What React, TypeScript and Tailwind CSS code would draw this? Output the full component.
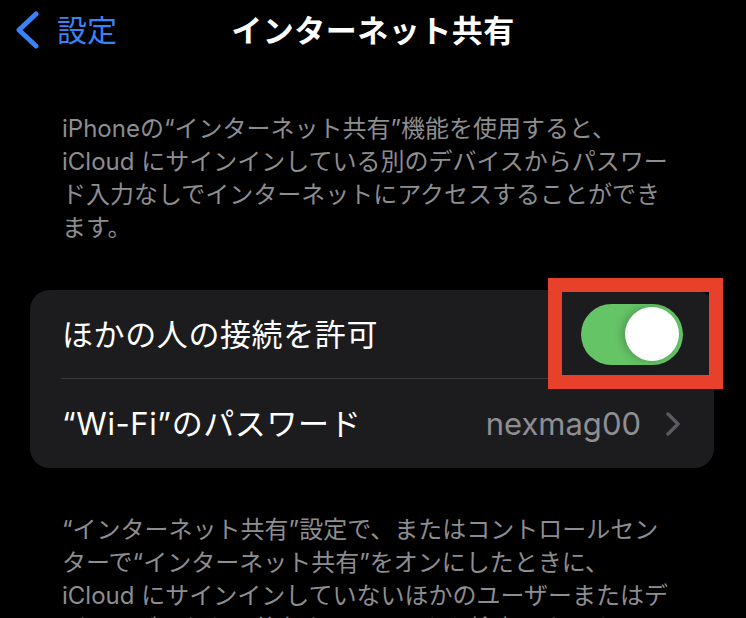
import React from "react";

const font = { fontFamily: 'Inter, "Noto Sans CJK JP", sans-serif' };

export default function App() {
  return (
    <div
      className="w-[746px] h-[618px] overflow-hidden bg-black text-white font-['Inter','Noto_Sans_CJK_JP',sans-serif]"
      style={font}
    >
      {/* Header */}
      <div className="grid grid-cols-[1fr_auto_1fr] items-center h-[60px]">
        <div className="flex items-center pl-[14px] gap-[17px] text-[#3a82f7]">
          <svg width="26" height="38" viewBox="0 0 26 38" fill="none">
            <path
              d="M22 3 L5 19 L22 35"
              stroke="#3a82f7"
              strokeWidth="5"
              strokeLinecap="round"
              strokeLinejoin="round"
            />
          </svg>
          <span className="text-[30px] leading-none">設定</span>
        </div>
        <div className="text-[31px] font-semibold leading-none tracking-[0.5px]">
          インターネット共有
        </div>
        <div />
      </div>

      {/* Description */}
      <div className="pt-[52px] pl-[62px] text-[24px] leading-[33px] text-[#8d8d92] whitespace-nowrap">
        <div>iPhoneの“インターネット共有”機能を使用すると、</div>
        <div>iCloud にサインインしている別のデバイスからパスワー</div>
        <div>ド入力なしでインターネットにアクセスすることができ</div>
        <div>ます。</div>
      </div>

      {/* Card */}
      <div className="mt-[46px] ml-[30px] mr-[32px] rounded-[20px] bg-[#1c1c1e]">
        <div className="h-[88px] flex items-center justify-between pl-[32px] pr-[31px]">
          <span className="text-[31px] leading-none tracking-[0.6px]">ほかの人の接続を許可</span>
          <div className="relative">
            <div className="w-[102px] h-[61px] rounded-full bg-[#65c466] flex items-center justify-end pr-[4px]">
              <div className="w-[54px] h-[54px] rounded-full bg-white shadow-[-3px_0_8px_rgba(0,0,0,0.22)]" />
            </div>
            <div className="absolute left-[-33px] top-[-26px] w-[175px] h-[111px] border-[14px] border-[#e8412b]" />
          </div>
        </div>
        <div className="ml-[31px] h-px bg-[#3a3a3c]" />
        <div className="h-[89px] flex items-center justify-between pl-[32px] pr-[33px]">
          <span className="text-[31px] leading-none tracking-[0.6px]">“Wi-Fi”のパスワード</span>
          <div className="flex items-center gap-[24px]">
            <span className="text-[31px] leading-none text-[#8e8e93]">nexmag00</span>
            <svg width="16" height="24" viewBox="0 0 16 24" fill="none">
              <path
                d="M3 2 L13 12 L3 22"
                stroke="#5b5b5f"
                strokeWidth="3.5"
                strokeLinecap="round"
                strokeLinejoin="round"
              />
            </svg>
          </div>
        </div>
      </div>

      {/* Footer */}
      <div className="mt-[45px] pl-[62px] text-[24px] leading-[33px] text-[#8d8d92] whitespace-nowrap">
        <div>“インターネット共有”設定で、またはコントロールセン</div>
        <div>ターで“インターネット共有”をオンにしたときに、</div>
        <div>iCloud にサインインしていないほかのユーザーまたはデ</div>
        <div>バイスがあなたの共有ネットワークを検索できます。</div>
      </div>
    </div>
  );
}
